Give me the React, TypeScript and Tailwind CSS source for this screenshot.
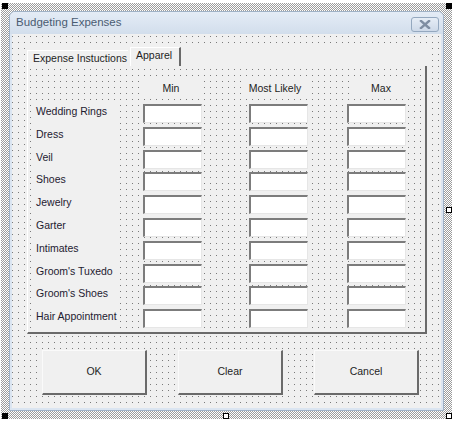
import React from "react";

const rows = [
  "Wedding Rings",
  "Dress",
  "Veil",
  "Shoes",
  "Jewelry",
  "Garter",
  "Intimates",
  "Groom's Tuxedo",
  "Groom's Shoes",
  "Hair Appointment",
];

const dots =
  "bg-[#f0f0f0] bg-[image:linear-gradient(90deg,transparent_1px,#f0f0f0_1px),linear-gradient(#7a7a7a_1px,#f0f0f0_1px)] bg-[length:6px_6px]";

function TextBox({ ml }: { ml: string }) {
  return (
    <div
      className={`${ml} h-[19px] w-[59px] shrink-0 border-t-2 border-l-2 border-b border-r border-t-[#7c7c7c] border-l-[#7c7c7c] border-b-[#e6e6e6] border-r-[#e6e6e6] bg-white`}
    />
  );
}

function Button({ label, ml }: { label: string; ml: string }) {
  return (
    <div
      className={`${ml} flex h-[45px] w-[105px] shrink-0 items-center justify-center border-l border-t border-r-2 border-b-2 border-l-[#fafafa] border-t-[#fafafa] border-r-[#6a6a6a] border-b-[#6a6a6a] bg-[#f0f0f0] text-[10.5px] text-[#1e1e1e]`}
    >
      {label}
    </div>
  );
}

function Handle({ cls, filled }: { cls: string; filled: boolean }) {
  return (
    <div
      className={`absolute h-[6px] w-[6px] border border-black ${filled ? "bg-black" : "bg-white"} ${cls}`}
    />
  );
}

export default function App() {
  return (
    <div
      className="relative h-[426px] w-[474px] overflow-hidden bg-white"
      style={{ fontFamily: '"Liberation Sans", Arial, sans-serif' }}
    >
      {/* selection frame */}
      <div className="ml-[1px] mt-[3px] h-[416px] w-[451px] bg-[conic-gradient(#9c9c9c_25%,#ffffff_0_50%,#9c9c9c_0_75%,#ffffff_0)] bg-[length:2px_2px] p-[8px]">
        {/* window */}
        <div className="flex h-full w-full flex-col overflow-hidden rounded-t-[6px] border border-[#9fb2c7] bg-[#dbe5f1]">
          {/* title bar */}
          <div className="flex h-[22px] shrink-0 items-center justify-between bg-[linear-gradient(#e4ecf6,#d2deec)] pl-[6px] pr-[4px]">
            <span className="text-[11.5px] text-[#4a5c72]">Budgeting Expenses</span>
            <div className="mt-[2px] flex h-[15px] w-[28px] items-center justify-center rounded-[3px] border border-[#94a8bf] bg-[linear-gradient(#e6edf6,#cdd9e8)]">
              <svg width="12" height="9" viewBox="0 0 12 9">
                <path
                  d="M2 1 L10 8 M10 1 L2 8"
                  stroke="#7f8ea2"
                  strokeWidth="2.4"
                  strokeLinecap="square"
                />
              </svg>
            </div>
          </div>
          {/* body */}
          <div className={`mx-[2px] mb-[2px] flex flex-1 flex-col ${dots} bg-[position:0px_2px]`}>
            {/* multipage */}
            <div className="ml-[15px] mt-[11px] w-[400px]">
              {/* tab strip */}
              <div className="flex h-[21px] items-end bg-[#f0f0f0]">
                <div className="flex h-[16px] w-[101px] items-center border-l border-t border-white pl-[5px] text-[10.5px] text-[#1e1e1e]">
                  Expense Instuctions
                </div>
                <div className="ml-[2px] flex h-[19px] w-[51px] items-center border-l border-t border-r-2 border-l-white border-t-white border-r-[#6a6a6a] pl-[5px] pb-[2px] text-[10.5px] text-[#1e1e1e]">
                  Apparel
                </div>
              </div>
              {/* page */}
              <div className={`flex h-[268px] flex-col border-l border-l-white border-r-2 border-b-2 border-r-[#6a6a6a] border-b-[#6a6a6a] ${dots} bg-[position:2px_3px]`}>
                {/* header row */}
                <div className="mt-[13px] flex h-[20px] text-[10.5px] text-[#1e1e1e]">
                  <div className="ml-[113px] flex w-[60px] items-center justify-center bg-[#f0f0f0]">Min</div>
                  <div className="ml-[41px] flex w-[66px] items-center justify-center bg-[#f0f0f0]">Most Likely</div>
                  <div className="ml-[43px] flex w-[60px] items-center justify-center bg-[#f0f0f0]">Max</div>
                </div>
                <div className="mt-[5px] flex flex-col gap-[3.8px]">
                  {rows.map((r) => (
                    <div key={r} className="flex h-[19px]">
                      <div className="-mt-[2px] ml-[5px] h-[23px] w-[84px] shrink-0 bg-[#f0f0f0] pl-[3px] pt-[2px] text-[10.5px] leading-[14px] text-[#1e2030]">
                        {r}
                      </div>
                      <TextBox ml="ml-[26px]" />
                      <TextBox ml="ml-[47px]" />
                      <TextBox ml="ml-[39px]" />
                    </div>
                  ))}
                </div>
              </div>
            </div>
            {/* buttons */}
            <div className="ml-[30px] mt-[16px] flex">
              <Button label="OK" ml="ml-0" />
              <Button label="Clear" ml="ml-[31px]" />
              <Button label="Cancel" ml="ml-[31px]" />
            </div>
          </div>
        </div>
      </div>
      {/* handles */}
      <Handle cls="left-[2px] top-[3px]" filled />
      <Handle cls="left-[446px] top-[3px]" filled />
      <Handle cls="left-[446px] top-[207px]" filled={false} />
      <Handle cls="left-[2px] top-[413px]" filled />
      <Handle cls="left-[223px] top-[413px]" filled={false} />
      <Handle cls="left-[446px] top-[413px]" filled={false} />
    </div>
  );
}
